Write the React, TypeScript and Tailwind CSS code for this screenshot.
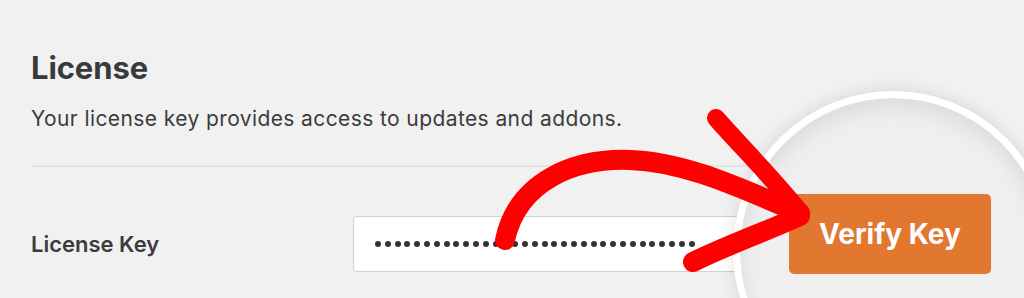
import React from 'react';

const dots = Array.from({ length: 33 });

const Arrow = () => (
  <svg
    className="absolute inset-0 pointer-events-none"
    width="1024"
    height="298"
    viewBox="0 0 1024 298"
    fill="none"
  >
    <g stroke="#ff0000" strokeLinecap="round" strokeLinejoin="round">
      {/* curved shaft */}
      <path d="M 505 240 C 518 180, 576 158, 630 160 C 690 162, 750 193, 800 213" strokeWidth="20" />
      {/* upper barb */}
      <path d="M 716 118 C 735 140, 770 175, 800 212" strokeWidth="18" />
      {/* lower barb */}
      <path d="M 800 216 C 765 232, 725 246, 693 262" strokeWidth="20" />
    </g>
  </svg>
);

const App = () => {
  return (
    <div
      className="relative w-[1024px] h-[298px] overflow-hidden bg-[#f1f1f1] text-[#3c3c3c]"
      style={{ fontFamily: 'Inter, "Liberation Sans", Arial, sans-serif' }}
    >
      <div className="pl-[31px] pt-[50px]">
        <h2 className="text-[31px] leading-[36px] font-bold tracking-[-0.1px] text-[#3a3a3a]">License</h2>
        <p className="mt-[19px] text-[21px] leading-[28px] tracking-[0.4px]">
          Your license key provides access to updates and addons.
        </p>
        <div className="mt-[32px] h-[2px] w-[760px] bg-[#e4e4e4]" />

        <div className="mt-[49px] flex items-center">
          <label className="w-[322px] text-[22px] leading-[28px] font-semibold text-[#3c3c3c]">
            License Key
          </label>
          <div className="flex h-[56px] w-[420px] items-center gap-[3.8px] rounded-[4px] border border-[#cfcfcf] bg-white pl-[21px]">
            {dots.map((_, i) => (
              <span key={i} className="h-[6px] w-[6px] shrink-0 rounded-full bg-[#333333]" />
            ))}
          </div>
        </div>
      </div>

      {/* magnifier lens */}
      <div className="absolute left-[733px] top-[91px] h-[320px] w-[320px] rounded-full border-[7px] border-white bg-[#efefef] shadow-[0_0_18px_rgba(0,0,0,0.12),inset_0_8px_22px_rgba(0,0,0,0.09)]">
        <div className="pl-[49px] pt-[96px]">
          <button className="flex h-[80px] w-[202px] items-center justify-center rounded-[5px] bg-[#e27730] text-[28px] font-bold text-white">
            Verify Key
          </button>
        </div>
      </div>

      <Arrow />
    </div>
  );
};

export default App;
